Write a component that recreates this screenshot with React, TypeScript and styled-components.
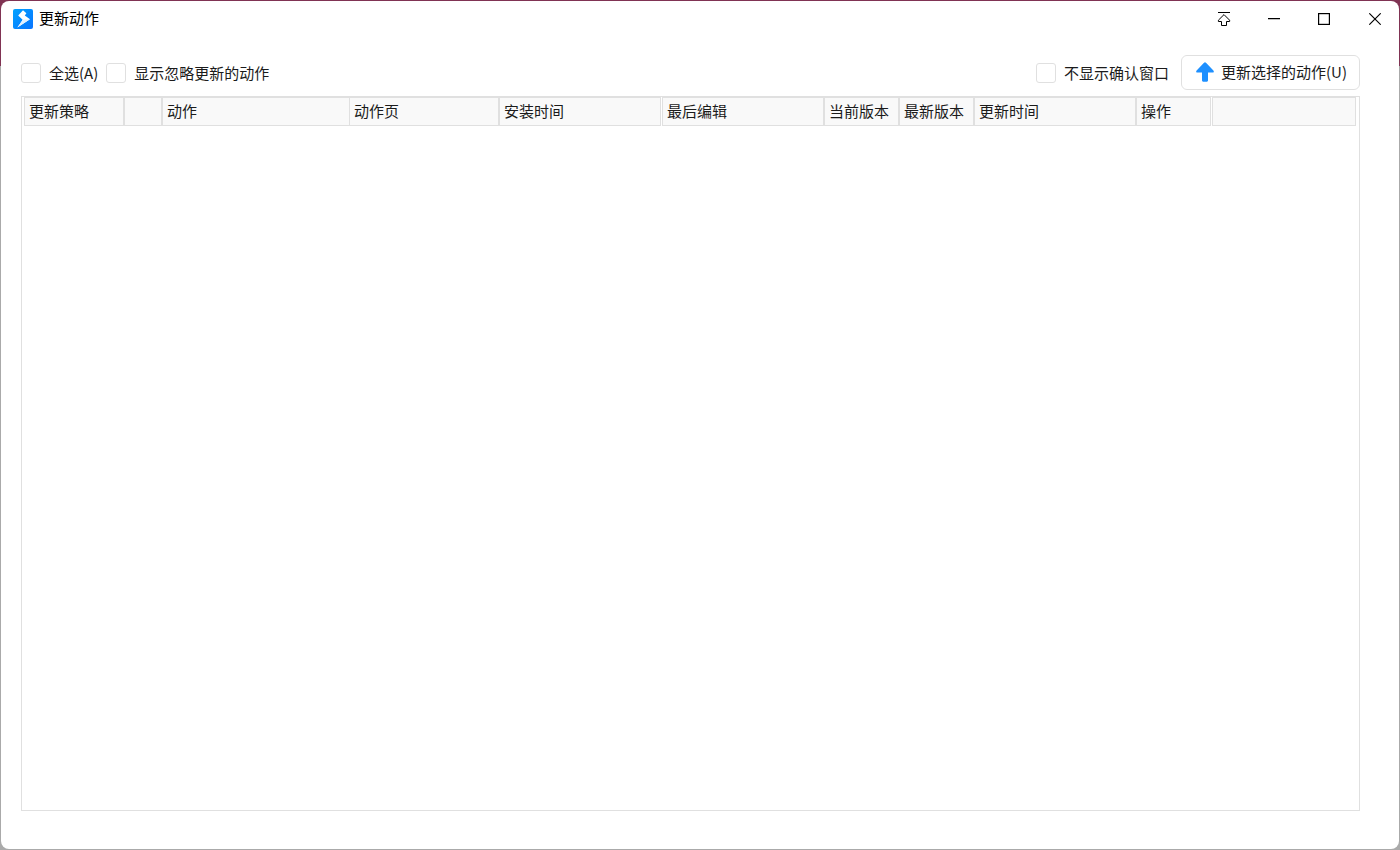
import React from "react";
import styled, { createGlobalStyle } from "styled-components";

const Global = createGlobalStyle`
  *, *::before, *::after { box-sizing: border-box; }
  html, body, #root { height: 100%; }
  body {
    margin: 0;
    background: linear-gradient(#803353 0, #803353 66px, #aaa 66px, #aaa 100%);
    color: #1b1b1b;
    font: 15px/20px "Noto Sans CJK SC", sans-serif;
    font-weight: 400;
  }
  button, input { font: inherit; color: inherit; }
`;

const Desktop = styled.div`
  height: 100%;
  padding: 1px;
`;

const Window = styled.main`
  height: 100%;
  display: flex;
  flex-direction: column;
  background: #fff;
  border-radius: 8px;
  overflow: hidden;
`;

const TitleBar = styled.header`
  display: flex;
  align-items: center;
  height: 36px;
  padding-left: 12px;
  color: #000;
`;

const Title = styled.h1`
  flex: 1;
  margin: 0 0 0 6px;
  padding-bottom: 2px;
  font-size: 15px;
  line-height: 20px;
  font-weight: 400;
`;

const CaptionButton = styled.button`
  display: grid;
  place-items: center;
  width: 50px;
  height: 36px;
  padding: 0;
  border: 0;
  background: transparent;
`;

const Toolbar = styled.div`
  display: flex;
  align-items: center;
  gap: 8px;
  height: 35px;
  margin: 18px 39px 0 20px;
`;

const Check = styled.label`
  display: flex;
  align-items: center;
  gap: 8px;
  white-space: nowrap;
`;

const CheckBox = styled.input`
  appearance: none;
  width: 20px;
  height: 20px;
  margin: 0;
  border: 1px solid #e0e0e0;
  border-radius: 3px;
  background: #fff;
  &:checked { background: #1e90ff; }
`;

const Spacer = styled.div`
  flex: 1;
`;

const UpdateButton = styled.button`
  display: flex;
  align-items: center;
  gap: 6px;
  height: 35px;
  margin-left: 4px;
  padding: 0 12px 2px 13px;
  border: 1px solid #e0e0e0;
  border-radius: 6px;
  background: #fff;
  white-space: nowrap;
`;

const List = styled.section`
  flex: 1;
  margin: 6px 39px 38px 20px;
  padding: 0 3px 0 2px;
  border: 1px solid #e0e0e0;
`;

const Table = styled.table`
  width: 100%;
  table-layout: fixed;
  border-collapse: separate;
  border-spacing: 0;
`;

const HeadCell = styled.th<{ $width?: number; $gap?: boolean }>`
  width: ${(p) => (p.$width ? `${p.$width}px` : "auto")};
  padding: 0 0 0 ${(p) => (p.$gap ? 1 : 0)}px;
  font-weight: 400;
  text-align: left;
`;

const HeadLabel = styled.div<{ $open?: boolean }>`
  height: 29px;
  padding: 3px 4px;
  border: 1px solid #e0e0e0;
  border-right-width: ${(p) => (p.$open ? 0 : 1)}px;
  background: #f9f9f9;
  line-height: 20px;
  white-space: nowrap;
`;

const columns: { label: string; width?: number; gap?: boolean; open?: boolean }[] = [
  { label: "更新策略", width: 100 },
  { label: "", width: 38 },
  { label: "动作", width: 187, open: true },
  { label: "动作页", width: 150 },
  { label: "安装时间", width: 162 },
  { label: "最后编辑", width: 163, gap: true },
  { label: "当前版本", width: 75 },
  { label: "最新版本", width: 75 },
  { label: "更新时间", width: 162 },
  { label: "操作", width: 75 },
  { label: "", gap: true },
];

const Logo = () => (
  <svg width="20" height="20" viewBox="0 0 20 20" aria-hidden="true">
    <defs>
      <linearGradient id="logo" x1="0" y1="0" x2="1" y2="1">
        <stop offset="0" stopColor="#00a2ff" />
        <stop offset="1" stopColor="#0a74ff" />
      </linearGradient>
    </defs>
    <rect width="20" height="20" rx="2" fill="url(#logo)" />
    <path d="M10 1.200 13.400 4.200 11.800 6.400 17 10.200 4.400 18.600 8.400 12.800 9.600 10.800 5.200 6.600Z" fill="#fff" />
    <path d="M9.600 10.800 17 10.200 4.400 18.600 8.400 12.800Z" fill="#e3f1ff" />
  </svg>
);

const App = () => (
  <>
    <Global />
    <Desktop>
      <Window>
        <TitleBar>
          <Logo />
          <Title>更新动作</Title>
          <CaptionButton aria-label="置顶">
            <svg width="14" height="14" viewBox="0 0 14 14" fill="none" stroke="#000">
              <path d="M1 .5h12" />
              <path d="M7 2.600 12.600 8.200V9.500H9.500v4h-5v-4H1.400V8.200Z" strokeLinejoin="round" />
            </svg>
          </CaptionButton>
          <CaptionButton aria-label="最小化">
            <svg width="12" height="12" viewBox="0 0 12 12" stroke="#000" strokeWidth="1.2">
              <path d="M0 5.600h12" />
            </svg>
          </CaptionButton>
          <CaptionButton aria-label="最大化">
            <svg width="12" height="12" viewBox="0 0 12 12" fill="none" stroke="#000" strokeWidth="1.2">
              <rect x=".6" y=".6" width="10.8" height="10.8" />
            </svg>
          </CaptionButton>
          <CaptionButton aria-label="关闭">
            <svg width="14" height="12" viewBox="0 0 14 12" stroke="#000" strokeWidth="1.1">
              <path d="M2.300 .3 13.700 11.700M13.700 .3 2.300 11.700" />
            </svg>
          </CaptionButton>
        </TitleBar>
        <Toolbar>
          <Check>
            <CheckBox type="checkbox" />
            全选(A)
          </Check>
          <Check>
            <CheckBox type="checkbox" />
            显示忽略更新的动作
          </Check>
          <Spacer />
          <Check>
            <CheckBox type="checkbox" />
            不显示确认窗口
          </Check>
          <UpdateButton>
            <svg width="20" height="20" viewBox="0 0 20 20" fill="#1e90ff" aria-hidden="true">
              <path d="M10 .3q.5 0 1 .5l7.400 7.800q.6.7.4 1.400-.3.6-1.200.6H13v8q0 1.100-1.100 1.100H8.100q-1.100 0-1.100-1.100v-8H2.400q-.9 0-1.200-.6-.2-.7.4-1.400L9 .8q.5-.5 1-.5Z" />
            </svg>
            更新选择的动作(U)
          </UpdateButton>
        </Toolbar>
        <List>
          <Table>
            <thead>
              <tr>
                {columns.map((c, i) => (
                  <HeadCell key={i} scope="col" $width={c.width} $gap={c.gap}>
                    <HeadLabel $open={c.open}>{c.label}</HeadLabel>
                  </HeadCell>
                ))}
              </tr>
            </thead>
          </Table>
        </List>
      </Window>
    </Desktop>
  </>
);

export default App;
